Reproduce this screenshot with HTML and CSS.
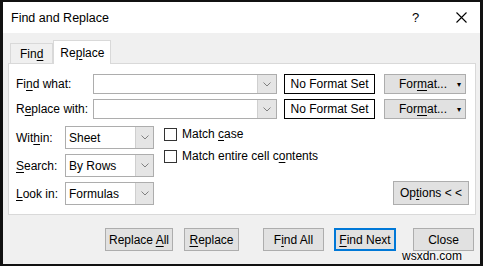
FILE: index.html
```html
<!DOCTYPE html>
<html lang="en">
<head>
    <meta charset="UTF-8">
    <title>Find and Replace</title>
    <link rel="stylesheet" href="styles.css">
</head>
<body>

    <div class="window">
        <div class="titlebar">
            <span class="title">Find and Replace</span>
            <span class="help">?</span>
            <span class="close-x">
                <svg width="11" height="11" viewBox="0 0 11 11"><path d="M0.5 0.5 L10.5 10.5 M10.5 0.5 L0.5 10.5" stroke="#000" stroke-width="1.1" fill="none"/></svg>
            </span>
        </div>

        <div class="body">
            <div class="tabs">
                <div class="tab"><span>Fin<u>d</u></span></div>
                <div class="tab active"><span>Re<u>p</u>lace</span></div>
            </div>

            <div class="panel">
                <div class="row">
                    <label class="label-wide">Fi<u>n</u>d what:</label>
                    <div class="combo">
                        <div class="combo-text"></div>
                        <div class="combo-arrow"><svg width="8" height="5" viewBox="0 0 8 5"><path d="M0.5 0.5 L4 4 L7.5 0.5" stroke="#808080" fill="none"/></svg></div>
                    </div>
                    <div class="format-set">No Format Set</div>
                    <div class="btn format-btn"><span>For<u>m</u>at...</span><span class="caret">&#9662;</span></div>
                </div>
                <div class="row">
                    <label class="label-wide">R<u>e</u>place with:</label>
                    <div class="combo">
                        <div class="combo-text"></div>
                        <div class="combo-arrow"><svg width="8" height="5" viewBox="0 0 8 5"><path d="M0.5 0.5 L4 4 L7.5 0.5" stroke="#808080" fill="none"/></svg></div>
                    </div>
                    <div class="format-set">No Format Set</div>
                    <div class="btn format-btn"><span>For<u>m</u>at...</span><span class="caret">&#9662;</span></div>
                </div>

                <div class="options">
                    <div class="selects">
                        <div class="select-row">
                            <label class="label-short">Wit<u>h</u>in:</label>
                            <div class="select">
                                <div class="select-text">Sheet</div>
                                <div class="select-arrow"><svg width="8" height="5" viewBox="0 0 8 5"><path d="M0.5 0.5 L4 4 L7.5 0.5" stroke="#808080" fill="none"/></svg></div>
                            </div>
                        </div>
                        <div class="select-row">
                            <label class="label-short"><u>S</u>earch:</label>
                            <div class="select">
                                <div class="select-text">By Rows</div>
                                <div class="select-arrow"><svg width="8" height="5" viewBox="0 0 8 5"><path d="M0.5 0.5 L4 4 L7.5 0.5" stroke="#808080" fill="none"/></svg></div>
                            </div>
                        </div>
                        <div class="select-row">
                            <label class="label-short"><u>L</u>ook in:</label>
                            <div class="select">
                                <div class="select-text">Formulas</div>
                                <div class="select-arrow"><svg width="8" height="5" viewBox="0 0 8 5"><path d="M0.5 0.5 L4 4 L7.5 0.5" stroke="#808080" fill="none"/></svg></div>
                            </div>
                        </div>
                    </div>

                    <div class="checks">
                        <div class="check"><span class="box"></span><span>Match <u>c</u>ase</span></div>
                        <div class="check"><span class="box"></span><span>Match entire cell c<u>o</u>ntents</span></div>
                    </div>

                    <div class="btn options-btn"><span>Op<u>t</u>ions &lt; &lt;</span></div>
                </div>
            </div>

            <div class="footer">
                <div class="btn btn-replace-all"><span>Replace <u>A</u>ll</span></div>
                <div class="btn btn-replace"><span><u>R</u>eplace</span></div>
                <div class="btn btn-find-all"><span>F<u>i</u>nd All</span></div>
                <div class="btn btn-find-next default"><span><u>F</u>ind Next</span></div>
                <div class="btn btn-close"><span>Close</span></div>
            </div>
        </div>

        <div class="watermark">wsxdn.com</div>
    </div>

</body>
</html>
```

FILE: styles.css
```css
body {
    margin: 0;
    padding: 0;
    font-family: "Liberation Sans", Arial, sans-serif;
    font-size: 12px;
    color: #000;
    background: #fff;
}

u {
    text-decoration-thickness: 1px;
    text-underline-offset: 2px;
}

.window {
    position: relative;
    width: 483px;
    height: 266px;
    box-sizing: border-box;
    border-style: solid;
    border-color: #111;
    border-width: 2px 3px 2px 3px;
    display: flex;
    flex-direction: column;
    overflow: hidden;
}

.titlebar {
    height: 31px;
    background: #fff;
    display: flex;
    align-items: center;
    padding-left: 8px;
}

.title {
    font-size: 12.5px;
    flex: 1;
}

.help {
    font-size: 13px;
    width: 44px;
}

.close-x {
    width: 24px;
    display: flex;
    align-items: center;
}

.body {
    flex: 1;
    background: #f0f0f0;
    padding: 0 4px 0 5px;
}

.tabs {
    height: 30px;
    display: flex;
    align-items: flex-end;
    padding-left: 2px;
}

.tab {
    height: 19px;
    padding: 0 9px;
    border: 1px solid #d9d9d9;
    border-bottom: none;
    background: #f0f0f0;
    display: flex;
    align-items: center;
}

.tab.active {
    height: 23px;
    background: #fff;
    margin-bottom: -1px;
    padding: 0 6px;
    position: relative;
    z-index: 1;
}

.panel {
    background: #fff;
    border: 1px solid #d9d9d9;
    padding: 10px 6px 9px 7px;
}

.row {
    display: flex;
    align-items: center;
    height: 20px;
    margin-bottom: 5px;
}

.label-wide {
    width: 77px;
}

.combo {
    width: 184px;
    height: 20px;
    box-sizing: border-box;
    border: 1px solid #adadad;
    display: flex;
}

.combo-text {
    flex: 1;
}

.combo-arrow {
    width: 18px;
    background: #e5e5e5;
    border-left: 1px solid #cfcfcf;
    display: flex;
    align-items: center;
    justify-content: center;
}

.format-set {
    width: 91px;
    height: 20px;
    box-sizing: border-box;
    border: 1px solid #000;
    margin-left: 7px;
    display: flex;
    align-items: center;
    justify-content: center;
}

.btn {
    background: #e1e1e1;
    border: 1px solid #adadad;
    box-sizing: border-box;
    display: flex;
    align-items: center;
    justify-content: center;
}

.format-btn {
    width: 82px;
    height: 20px;
    margin-left: 9px;
    padding-left: 10px;
}

.caret {
    font-size: 8px;
    margin-left: 10px;
}

.options {
    display: flex;
    margin-top: 7px;
}

.selects {
    display: flex;
    flex-direction: column;
    gap: 5px;
}

.select-row {
    display: flex;
    align-items: center;
}

.label-short {
    width: 49px;
}

.select {
    width: 89px;
    height: 23px;
    box-sizing: border-box;
    border: 1px solid #adadad;
    display: flex;
}

.select-text {
    flex: 1;
    padding-left: 3px;
    display: flex;
    align-items: center;
}

.select-arrow {
    width: 17px;
    background: #e5e5e5;
    border-left: 1px solid #cfcfcf;
    display: flex;
    align-items: center;
    justify-content: center;
}

.checks {
    margin-left: 10px;
    display: flex;
    flex-direction: column;
    gap: 8px;
    padding-top: 1px;
}

.check {
    display: flex;
    align-items: center;
    height: 14px;
}

.box {
    width: 13px;
    height: 13px;
    box-sizing: border-box;
    border: 1px solid #333;
    background: #fff;
    margin-right: 5px;
}

.options-btn {
    margin-left: auto;
    align-self: flex-end;
    width: 76px;
    height: 24px;
}

.footer {
    display: flex;
    padding-top: 13px;
    padding-left: 97px;
}

.footer .btn {
    height: 23px;
}

.btn-replace-all {
    width: 68px;
}

.btn-replace {
    width: 55px;
    margin-left: 11px;
}

.btn-find-all {
    width: 61px;
    margin-left: 24px;
}

.btn-find-next {
    width: 62px;
    margin-left: 10px;
}

.btn-close {
    width: 61px;
    margin-left: 17px;
}

.btn.default {
    border: 2px solid #0078d7;
}

.watermark {
    position: absolute;
    right: 18px;
    bottom: 1px;
    font-size: 12px;
    color: #000;
    text-shadow: 0 0 2px #fff, 0 0 2px #fff;
}
```
